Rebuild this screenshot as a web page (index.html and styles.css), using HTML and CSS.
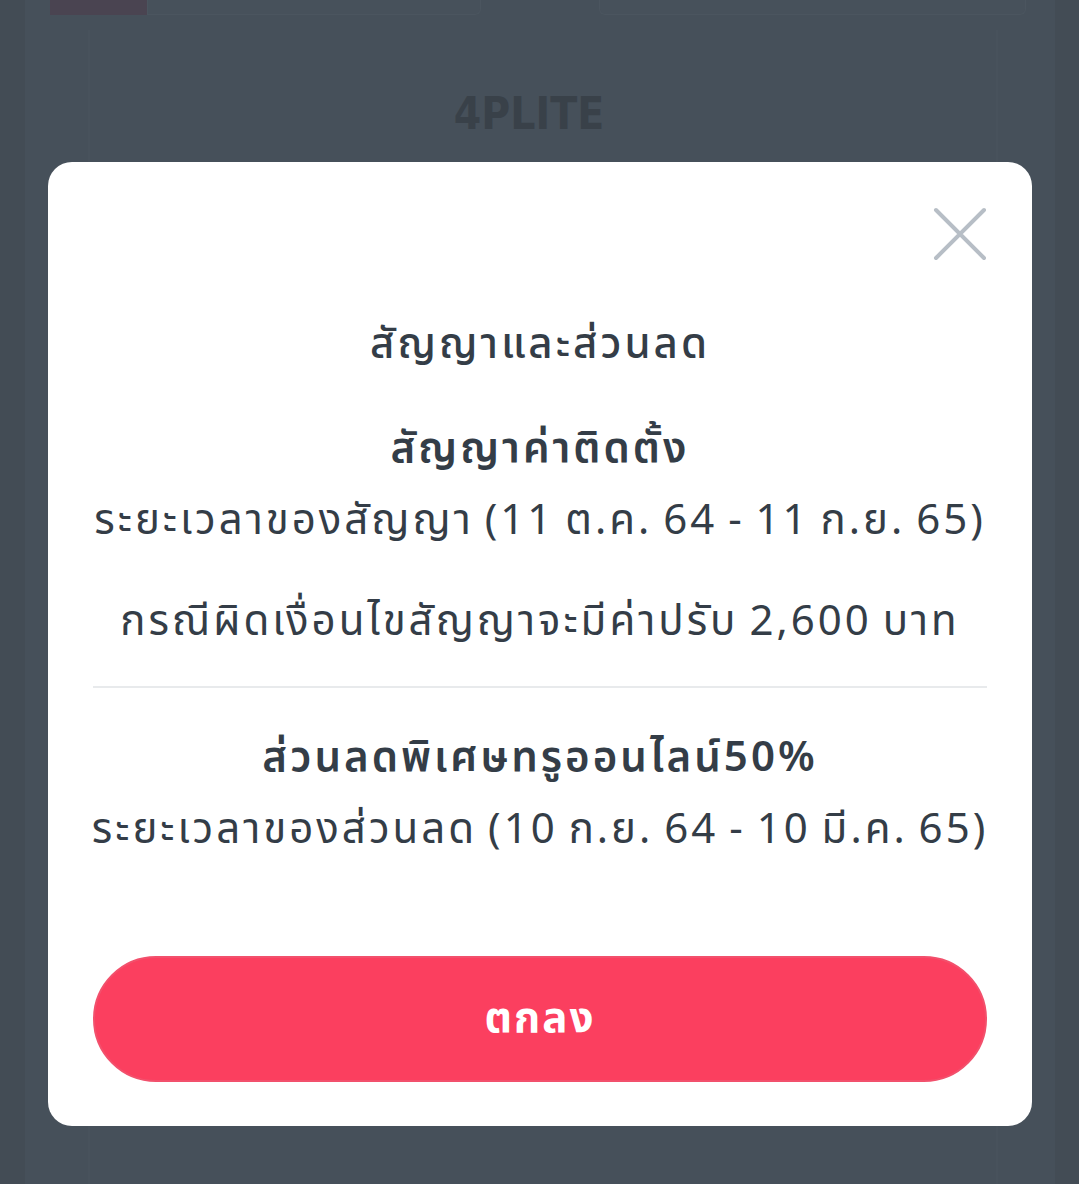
FILE: index.html
```html
<!DOCTYPE html>
<html lang="th">
<head>
<meta charset="utf-8">
<link rel="stylesheet" href="styles.css">
</head>
<body>
<div class="page">
  <div class="top-row">
    <div class="thumb"></div>
    <div class="tab tab-left"></div>
    <div class="tab tab-mid"></div>
    <div class="tab tab-right"></div>
  </div>
  <div class="card">
    <div class="brand">4PLITE</div>
  </div>
</div>
<div class="modal">
  <button class="close" aria-label="close">
    <svg width="56" height="56" viewBox="0 0 56 56"><path d="M4 4 L52 52 M52 4 L4 52" stroke="#b7bec6" stroke-width="4" stroke-linecap="round" fill="none"/></svg>
  </button>
  <h2 class="title">สัญญาและส่วนลด</h2>
  <div class="section">
    <h3 class="sub">สัญญาค่าติดตั้ง</h3>
    <p class="line">ระยะเวลาของสัญญา (11 ต.ค. 64 - 11 ก.ย. 65)</p>
    <p class="line line-gap">กรณีผิดเงื่อนไขสัญญาจะมีค่าปรับ 2,600 บาท</p>
  </div>
  <hr class="divider">
  <div class="section">
    <h3 class="sub sub-after">ส่วนลดพิเศษทรูออนไลน์50%</h3>
    <p class="line">ระยะเวลาของส่วนลด (10 ก.ย. 64 - 10 มี.ค. 65)</p>
  </div>
  <button class="ok">ตกลง</button>
</div>
</body>
</html>
```

FILE: styles.css
```css
html, body {
  margin: 0;
  padding: 0;
}
body {
  width: 1079px;
  height: 1184px;
  overflow: hidden;
  background: #434c55;
  font-family: "Noto Sans", "Noto Sans Thai", sans-serif;
  position: relative;
}
.page {
  margin: 0 24px 0 25px;
  height: 1184px;
  background: #46505a;
  display: flex;
  flex-direction: column;
}
.top-row {
  display: flex;
  height: 15px;
  padding-left: 25px;
}
.thumb {
  width: 97px;
  height: 15px;
  background: #4a4451;
}
.tab {
  height: 14px;
  border: 1px solid #4b555f;
  border-top: none;
  background: #47515b;
}
.tab-left { width: 332px; border-radius: 0 0 6px 0; }
.tab-mid { width: 118px; border: none; background: transparent; }
.tab-right { width: 425px; border-radius: 0 0 6px 6px; }
.card {
  margin: 15px 57px 0 63px;
  flex: 1;
  background: #46505a;
  border-left: 2px solid #48525c;
  border-right: 2px solid #48525c;
  display: flex;
  flex-direction: column;
  align-items: center;
}
.brand {
  margin-top: 58px;
  margin-right: 28px;
  font-family: "Liberation Sans Narrow", "DejaVu Sans Condensed", sans-serif;
  font-weight: 700;
  font-size: 44px;
  color: #394149;
}
.modal {
  position: absolute;
  left: 48px;
  top: 162px;
  width: 984px;
  height: 964px;
  box-sizing: border-box;
  background: #ffffff;
  border-radius: 24px;
  padding: 152px 45px 0 45px;
  display: flex;
  flex-direction: column;
  align-items: stretch;
  color: #343d47;
  text-align: center;
  letter-spacing: 3px;
  word-spacing: -3px;
  white-space: nowrap;
}
.modal > * { flex-shrink: 0; }
.close {
  position: absolute;
  top: 44px;
  right: 44px;
  width: 56px;
  height: 56px;
  padding: 0;
  border: none;
  background: transparent;
}
.close svg { display: block; }
.title {
  margin: 0;
  font-size: 42px;
  font-weight: 500;
  line-height: 56px;
}
.section {
  display: flex;
  flex-direction: column;
}
.sub {
  margin: 48px 0 0;
  font-size: 42px;
  font-weight: 600;
  line-height: 56px;
}
.sub-after { margin-top: 39px; }
.line {
  margin: 16px -20px 0;
  font-size: 42px;
  font-weight: 400;
  line-height: 56px;
}
.line-gap { margin-top: 45px; }
.divider {
  margin: 39px 0 0;
  border: none;
  height: 2px;
  background: #e8eaec;
}
.ok {
  margin-top: 101px;
  height: 126px;
  border-radius: 63px;
  border: 2px solid #f2506c;
  background: #fb3f5f;
  color: #ffffff;
  font-family: inherit;
  font-size: 42px;
  font-weight: 700;
  letter-spacing: 2px;
}
```
